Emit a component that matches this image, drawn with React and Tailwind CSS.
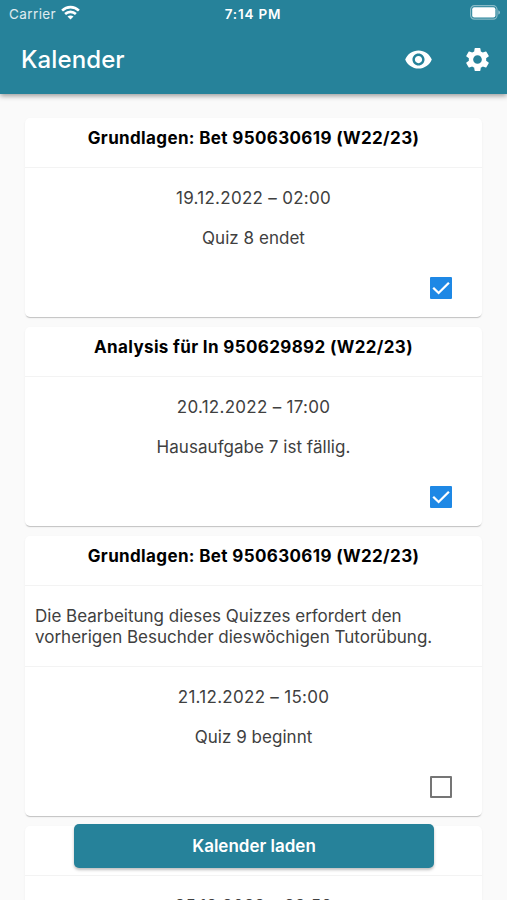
import { MdRemoveRedEye, MdSettings } from "react-icons/md";

const events = [
    {
        id: 1,
        course: "Grundlagen: Bet 950630619 (W22/23)",
        date: "19.12.2022 – 02:00",
        title: "Quiz 8 endet",
        done: true,
    },
    {
        id: 2,
        course: "Analysis für In 950629892 (W22/23)",
        date: "20.12.2022 – 17:00",
        title: "Hausaufgabe 7 ist fällig.",
        done: true,
    },
    {
        id: 3,
        course: "Grundlagen: Bet 950630619 (W22/23)",
        note: ["Die Bearbeitung dieses Quizzes erfordert den", "vorherigen Besuchder dieswöchigen Tutorübung."],
        date: "21.12.2022 – 15:00",
        title: "Quiz 9 beginnt",
        done: false,
    },
    {
        id: 4,
        course: "",
        date: "25.12.2022 – 23:59",
        title: "",
        done: false,
    },
];

function StatusBar() {
    return (
        <div className="grid grid-cols-3 items-center h-7 pl-[9px] pr-[6px] text-[13.5px]">
            <div className="flex items-center gap-[5px] text-white/85 tracking-[0.4px]">
                <span>Carrier</span>
                <svg className="-mt-[3px]" width="19" height="15" viewBox="0 0 19 15" fill="none" stroke="white" strokeWidth="2.6">
                    <path d="M1.1 5.6C5.9 .9 13.1 .9 17.9 5.6" />
                    <path d="M4.1 9C7.2 6.1 11.8 6.1 14.9 9" />
                    <path d="M9.5 14.6L6.5 11.6C8.2 10 10.8 10 12.5 11.6Z" fill="white" stroke="none" />
                </svg>
            </div>
            <span className="-ml-1 text-center font-semibold text-white tracking-[0.8px]">7:14 PM</span>
            <svg className="justify-self-end -mt-[3px]" width="31" height="15" viewBox="0 0 31 15">
                <rect x=".6" y=".7" width="26.4" height="13.4" rx="3.8" fill="none" stroke="white" strokeOpacity=".45" strokeWidth="1.2" />
                <rect x="2.2" y="2.3" width="23.2" height="10.2" rx="2" fill="white" />
                <path d="M28.3 5.2C30.6 6 30.6 8.8 28.3 9.6Z" fill="white" fillOpacity=".5" />
            </svg>
        </div>
    );
}

function Checkbox({ checked }) {
    if (!checked) {
        return <div role="checkbox" aria-checked="false" className="size-[22px] border-2 border-[#757575] rounded-[1px]" />;
    }
    return (
        <div role="checkbox" aria-checked="true" className="size-[22px] bg-[#1e88e5] rounded-[1px]">
            <svg width="22" height="22" viewBox="0 0 22 22" fill="none" stroke="white" strokeWidth="2.3">
                <path d="M3.2 10.7L8.6 16L18.9 5.7" />
            </svg>
        </div>
    );
}

function EventCard({ event }) {
    return (
        <article className="shrink-0 bg-white rounded-[5px] shadow-[0_2px_1px_-1px_rgba(0,0,0,0.14),0_1px_1px_rgba(0,0,0,0.07),0_1px_3px_rgba(0,0,0,0.04)]">
            <h2 className="h-[50px] pt-[10px] border-b border-[#f3f3f3] text-center text-[17px] leading-5 font-bold text-black tracking-[0.36px]">
                {event.course}
            </h2>
            {event.note && (
                <div className="h-[81px] pt-5 pl-[10px] border-b border-[#f3f3f3] text-[17px] leading-[20.5px] whitespace-nowrap">
                    {event.note.map((line) => (
                        <p key={line}>{line}</p>
                    ))}
                </div>
            )}
            <div className="h-[149px] pt-5 text-center text-[17px] leading-5">
                <p className="tracking-[0.28px]">{event.date}</p>
                <p className="h-5 mt-5 tracking-[0.04px]">{event.title}</p>
                <div className="flex justify-end pr-[30px] mt-[29px]">
                    <Checkbox checked={event.done} />
                </div>
            </div>
        </article>
    );
}

export default function App() {
    return (
        <div className="relative flex flex-col w-[507px] h-[900px] overflow-hidden bg-[#fafafa] text-[#404040] font-['Inter','Liberation_Sans',sans-serif]">
            {/* App bar */}
            <header className="shrink-0 h-[94px] bg-[#26829a] shadow-[0_2px_5px_rgba(0,0,0,0.38)]">
                <StatusBar />
                <div className="flex items-center h-16 pl-[21px] pr-[15px] text-white">
                    <h1 className="flex-1 text-2xl font-medium tracking-[0.1px]">Kalender</h1>
                    <MdRemoveRedEye className="size-[29px] -mt-0.5" />
                    <MdSettings className="size-[29px] ml-[30px] -mt-0.5" />
                </div>
            </header>

            {/* Events */}
            <main className="flex-1 flex flex-col gap-[10px] min-h-0 overflow-hidden pt-6 px-[25px]">
                {events.map((event) => (
                    <EventCard key={event.id} event={event} />
                ))}
            </main>

            <button className="absolute left-[74px] top-[824px] w-[360px] h-11 pt-0.5 rounded-[5px] bg-[#26829a] text-white text-[17px] font-semibold shadow-[0_2px_3px_rgba(0,0,0,0.25)]">
                Kalender laden
            </button>
        </div>
    );
}
